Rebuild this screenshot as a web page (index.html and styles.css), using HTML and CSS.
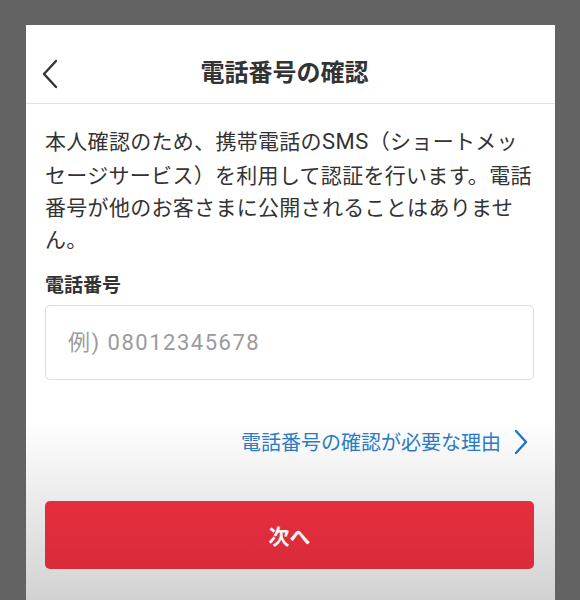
FILE: index.html
```html
<!DOCTYPE html>
<html lang="ja">
<head>
    <meta charset="UTF-8">
    <meta name="viewport" content="width=device-width, initial-scale=1.0">
    <title>電話番号の確認</title>
    <link rel="stylesheet" href="styles.css">
</head>
<body>
    <div class="screen">
        <header class="header">
            <button class="back" aria-label="戻る">
                <svg width="18" height="30" viewBox="0 0 18 30">
                    <path d="M15 2 L3 15 L15 28" fill="none" stroke="#333" stroke-width="2.4" stroke-linecap="round" stroke-linejoin="round"/>
                </svg>
            </button>
            <h1 class="title">電話番号の確認</h1>
        </header>

        <main class="content">
            <p class="lead">本人確認のため、携帯電話の<span class="latin">SMS</span>（ショートメッ<br>セージサービス）を利用して認証を行います。電話<br>番号が他のお客さまに公開されることはありませ<br>ん。</p>

            <label class="label" for="phone">電話番号</label>
            <input id="phone" class="input" type="tel" placeholder="例) 08012345678">

            <a class="reason" href="#">
                電話番号の確認が必要な理由
                <svg width="16" height="26" viewBox="0 0 16 26">
                    <path d="M3 2 L13 13 L3 24" fill="none" stroke="#1f74c4" stroke-width="2.4" stroke-linecap="round" stroke-linejoin="round"/>
                </svg>
            </a>

            <button class="next">次へ</button>
        </main>
    </div>
</body>
</html>
```

FILE: styles.css
```css
body {
    margin: 0;
    height: 600px;
    background-color: #636363;
    font-family: "Noto Sans CJK JP", "Noto Sans", sans-serif;
    overflow: hidden;
}

.screen {
    width: 529px;
    height: 575px;
    margin: 25px 0 0 26px;
    background: linear-gradient(to bottom, #fff 0, #fff 395px, #ececec 470px, #d2d2d2 575px);
}

.header {
    height: 78px;
    display: flex;
    align-items: center;
    justify-content: center;
    position: relative;
    border-bottom: 1px solid #e2e2e2;
    background-color: #fff;
}

.back {
    position: absolute;
    left: 15px;
    top: 34px;
    padding: 0;
    border: none;
    background: none;
    display: flex;
}

.title {
    margin: 14px 12px 0 0;
    font-size: 24px;
    font-weight: 700;
    color: #333;
    line-height: 1;
}

.content {
    padding: 20px 21px 0 19px;
    display: flex;
    flex-direction: column;
}

.lead {
    margin: 0;
    font-size: 21px;
    line-height: 32px;
    letter-spacing: 0.3px;
    color: #333;
    white-space: nowrap;
}

.lead .latin {
    font-family: "Roboto", sans-serif;
    font-size: 22px;
    letter-spacing: 0.5px;
}

.label {
    margin-top: 20px;
    font-size: 19px;
    font-weight: 700;
    color: #333;
    line-height: 1;
}

.input {
    margin-top: 12px;
    height: 75px;
    box-sizing: border-box;
    border: 1.5px solid #dcdcdc;
    border-radius: 5px;
    padding: 0 22px;
    font-family: "Roboto", "Noto Sans CJK JP", sans-serif;
    font-size: 22px;
    letter-spacing: 1.5px;
    color: #333;
    background-color: #fff;
}

.input::placeholder {
    color: #9b9b9b;
}

.reason {
    margin-top: 49px;
    align-self: flex-end;
    display: flex;
    align-items: center;
    gap: 12px;
    font-size: 20px;
    color: #2a7bc4;
    text-decoration: none;
    line-height: 1;
    margin-right: 5px;
}

.next {
    margin-top: 46px;
    height: 68px;
    border: none;
    border-radius: 5px;
    background: linear-gradient(to bottom, #e52e3e, #d92b3a);
    color: #f4f4f4;
    font-family: "Noto Sans CJK JP", sans-serif;
    font-size: 21px;
    font-weight: 700;
}
```
